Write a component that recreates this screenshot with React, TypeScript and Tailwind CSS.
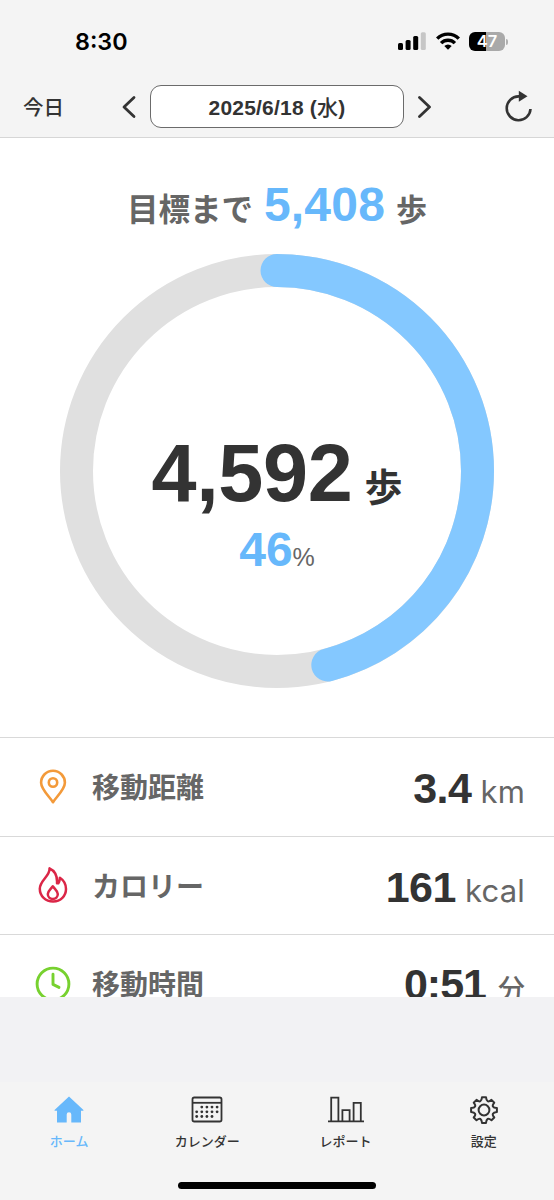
import type { ReactNode } from 'react';

const RADIUS = 200.5;
const CIRCUMFERENCE = 2 * Math.PI * RADIUS;

function StatusBar() {
  return (
    <div className="h-[76px] flex items-start justify-between pl-[75px] pr-[46px] pt-[27px]">
      <span className="font-['Inter',sans-serif] font-semibold text-[23.3px] leading-[29px] text-black">8:30</span>
      <div className="flex items-start pt-[4px]">
        <svg width="28" height="20" viewBox="0 0 28 20">
          <rect x="0" y="12" width="5" height="7" rx="1.5" fill="#000" />
          <rect x="7.6" y="9" width="5" height="10" rx="1.5" fill="#000" />
          <rect x="15.2" y="5" width="5" height="14" rx="1.5" fill="#000" />
          <rect x="22.8" y="1.3" width="5" height="17.7" rx="1.5" fill="#c6c6c6" />
        </svg>
        <svg className="ml-[10px]" width="24" height="20" viewBox="0 0 24 20">
          <g fill="none" stroke="#000" strokeWidth="3.4">
            <path d="M1.2 7.6a15.2 15.2 0 0 1 21.6 0" />
            <path d="M5.1 12.1a9.7 9.7 0 0 1 13.8 0" />
          </g>
          <path d="M12 18.8l-3.7-3.7a5.3 5.3 0 0 1 7.4 0z" fill="#000" />
        </svg>
        <div className="ml-[9px] mt-px flex items-center">
          <div className="w-[36px] h-[19px] rounded-[6px] bg-linear-to-r from-black from-[47%] to-[#a9a9a9] to-[47%] flex items-center justify-center">
            <span className="font-['Inter',sans-serif] font-semibold text-[16.5px] leading-[19px] text-white">47</span>
          </div>
          <div className="ml-px w-[2px] h-[6px] rounded-r-full bg-[#b0b0b0]" />
        </div>
      </div>
    </div>
  );
}

function DateBar() {
  return (
    <div className="h-[62px] flex items-start pl-[23px] pt-[9px] border-b border-[#d6d6d6]">
      <span className="w-[99px] text-[20.5px] leading-[45px] font-medium">今日</span>
      <svg className="mt-[10px]" width="14" height="24" viewBox="0 0 14 24" fill="none" stroke="#333" strokeWidth="2.8" strokeLinecap="round" strokeLinejoin="round">
        <path d="M12 2.5L2 12l10 9.5" />
      </svg>
      <div className="ml-[14px] w-[254px] h-[43px] rounded-[11px] border-[1.5px] border-[#6b6b6b] bg-white text-center text-[21px] leading-[43px] font-bold tracking-[0.2px]">
        2025/6/18 (<span className="font-medium">水</span>)
      </div>
      <svg className="ml-[14px] mt-[10px]" width="14" height="24" viewBox="0 0 14 24" fill="none" stroke="#333" strokeWidth="2.8" strokeLinecap="round" strokeLinejoin="round">
        <path d="M1.5 2.5l10 9.5-10 9.5" />
      </svg>
      <svg className="ml-[73px] mt-[5px]" width="28" height="32" viewBox="0 0 28 32">
        <path d="M16.5 6.4h-3A11.900 11.900 0 1 0 25.500 19" fill="none" stroke="#333" strokeWidth="2.6" />
        <path d="M13.800 .8l8.700 5.400-8.700 5.500z" fill="#333" />
      </svg>
    </div>
  );
}

function StepRing() {
  return (
    <div className="w-[434px] h-[434px] mx-auto grid">
      <svg className="col-start-1 row-start-1" width="434" height="434" viewBox="0 0 434 434" fill="none" strokeWidth="33">
        <circle cx="217" cy="217" r={RADIUS} stroke="#e0e0e0" />
        <circle
          cx="217"
          cy="217"
          r={RADIUS}
          stroke="#84c8ff"
          strokeLinecap="round"
          strokeDasharray={`${CIRCUMFERENCE * 0.459} ${CIRCUMFERENCE}`}
          transform="rotate(-90 217 217)"
        />
      </svg>
      <div className="col-start-1 row-start-1 flex flex-col items-center pt-[174px]">
        <div className="flex items-baseline h-[92px] leading-[90px] font-bold">
          <span className="text-[81px] tracking-[-0.3px]">4,592</span>
          <span className="text-[38px] ml-[12px]">歩</span>
        </div>
        <div className="flex items-baseline h-[60px] leading-[60px]">
          <span className="text-[48px] font-bold text-[#67b8fb]">46</span>
          <span className="text-[25px] text-[#666]">%</span>
        </div>
      </div>
    </div>
  );
}

function PinIcon() {
  return (
    <svg width="36" height="36" viewBox="0 0 36 36" fill="none" stroke="#f39a3a" strokeWidth="2.6" strokeLinejoin="round">
      <path d="M18 33.2C14.4 27.6 6.1 20.3 6.1 13.7a11.9 11.9 0 0 1 23.8 0C29.9 20.3 21.6 27.6 18 33.2z" />
      <circle cx="18" cy="13.5" r="4.2" />
    </svg>
  );
}

function FlameIcon() {
  return (
    <svg width="36" height="36" viewBox="0 0 36 36" fill="none" stroke="#db2647" strokeWidth="2.5" strokeLinejoin="round">
      <path d="M14.5 1.4c.9 7.4-9.7 12-9.7 20.3 0 7.4 5.7 12.7 13.3 12.7S31 29 31 22c0-5.400-2.300-8.800-6.100-11.300-.2 2.500-.6 4.500-1.600 5.600H22C22.400 9.800 20.300 4 14.500 1.400z" />
      <path d="M17.8 19.3c-2.1 3-5 4.700-5 7.800a5 5 0 0 0 10 0c0-3.100-2.900-4.800-5-7.800z" />
    </svg>
  );
}

function ClockIcon() {
  return (
    <svg width="36" height="36" viewBox="0 0 36 36" fill="none" stroke="#77d12f" strokeWidth="2.9" strokeLinecap="round" strokeLinejoin="round">
      <circle cx="18" cy="18" r="15.9" />
      <path d="M18 8.2v10.2l6 3" />
    </svg>
  );
}

function StatRow({ icon, label, value, unit }: { icon: ReactNode; label: string; value: string; unit: string }) {
  const isLatin = /^[a-z]+$/.test(unit);

  return (
    <div className="h-[98.5px] shrink-0 flex items-center border-t border-[#d9d9d9] pl-[35px] pr-[29px]">
      {icon}
      <span className="ml-[21px] pt-[5px] text-[28px] leading-[40px] font-bold text-[#666]">{label}</span>
      <div className="ml-auto pt-[7px] flex items-baseline leading-[50px]">
        {isLatin ? (
          <>
            <span className="text-[43px] font-bold tracking-[-0.5px]">{value}</span>
            <span className="ml-[9px] font-['Inter',sans-serif] text-[31px] tracking-[0.2px] text-[#666]">{unit}</span>
          </>
        ) : (
          <>
            <span className="text-[43px] font-bold tracking-[-1px]">{value}</span>
            <span className="ml-[12px] text-[27px] font-medium text-[#666]">{unit}</span>
          </>
        )}
      </div>
    </div>
  );
}

function HomeIcon() {
  return (
    <svg width="30" height="27" viewBox="0 0 30 27" fill="#67b8fb">
      <path d="M15 .5L29.2 13.8c.5.5.3 1-.3 1H27v11.7h-9.7v-8a2.3 2.3 0 0 0-4.6 0v8H3V14.8H1.1c-.6 0-.8-.5-.3-1z" />
    </svg>
  );
}

const calendarDots = [
  [10.8, 15.9, 21, 26.1],
  [5.7, 10.8, 15.9, 21, 26.1],
  [5.7, 10.8, 15.9, 21],
];

function CalendarIcon() {
  return (
    <svg width="32" height="27" viewBox="0 0 32 27">
      <rect x="1.5" y="1.5" width="29" height="24" rx="1.8" fill="none" stroke="#333" strokeWidth="1.8" />
      <path d="M1.5 6.8h29" stroke="#333" strokeWidth="1.8" />
      {calendarDots.map((row, i) =>
        row.map((x) => <circle key={`${i}-${x}`} cx={x} cy={11.1 + i * 4.7} r="1.4" fill="#333" />),
      )}
    </svg>
  );
}

function ReportIcon() {
  return (
    <svg width="36" height="27" viewBox="0 0 36 27" fill="none" stroke="#333" strokeWidth="1.8">
      <path d="M0 25.3h36M3.2 25V1.6h7.2V25M14.4 25V14.2h7.2V25M25.6 25V6.8h7.2V25" />
    </svg>
  );
}

function GearIcon() {
  return (
    <svg width="28" height="28" viewBox="0 0 28 28" fill="none" stroke="#333" strokeWidth="2" strokeLinejoin="round">
      <path d="M12 1.2h4q.3 3.3 1.6 4t3.9-1.3l2.8 2.8q-2.1 2.5-1.4 3.8t4 1.6v4q-3.300.3-4 1.600t1.400 3.800l-2.800 2.800q-2.600-2-3.900-1.300t-1.600 3.900h-4q-.3-3.200-1.600-3.900t-3.900 1.300l-2.800-2.800q2.100-2.500 1.400-3.800t-4-1.600v-4q3.300-.3 4-1.600T3.700 6.700l2.800-2.800q2.600 2 3.900 1.300T12 1.200z" />
      <circle cx="14" cy="14" r="5.4" />
    </svg>
  );
}

function TabItem({ icon, label, active }: { icon: ReactNode; label: string; active?: boolean }) {
  return (
    <button className={active ? 'flex-1 flex flex-col items-center text-[#67b8fb]' : 'flex-1 flex flex-col items-center text-[#333]'}>
      <div className="h-[36px]">{icon}</div>
      <span className="text-[13px] leading-[20px] font-medium">{label}</span>
    </button>
  );
}

export default function App() {
  return (
    <div className="w-[554px] h-[1200px] overflow-hidden flex flex-col bg-[#f4f4f4] text-[#333] font-['Liberation_Sans','Noto_Sans_CJK_JP',sans-serif]">
      <StatusBar />
      <DateBar />
      <main className="h-[859px] shrink-0 overflow-hidden bg-white">
        <div className="h-[116px] flex items-baseline justify-center pt-[37px] leading-[60px] font-bold text-[#666]">
          <span className="text-[31.5px]">目標まで</span>
          <span className="ml-[11px] text-[48px] tracking-[0.2px] text-[#67b8fb]">5,408</span>
          <span className="ml-[11px] text-[31px]">歩</span>
        </div>
        <StepRing />
        <div className="mt-[49px] flex flex-col">
          <StatRow icon={<PinIcon />} label="移動距離" value="3.4" unit="km" />
          <StatRow icon={<FlameIcon />} label="カロリー" value="161" unit="kcal" />
          <StatRow icon={<ClockIcon />} label="移動時間" value="0:51" unit="分" />
        </div>
      </main>
      <div className="h-[85px] shrink-0 bg-[#f2f2f4]" />
      <nav className="h-[100px] shrink-0 flex pt-[14px] pr-px">
        <TabItem icon={<HomeIcon />} label="ホーム" active />
        <TabItem icon={<CalendarIcon />} label="カレンダー" />
        <TabItem icon={<ReportIcon />} label="レポート" />
        <TabItem icon={<GearIcon />} label="設定" />
      </nav>
      <div className="mx-auto w-[198px] h-[7px] shrink-0 rounded-full bg-black" />
    </div>
  );
}
